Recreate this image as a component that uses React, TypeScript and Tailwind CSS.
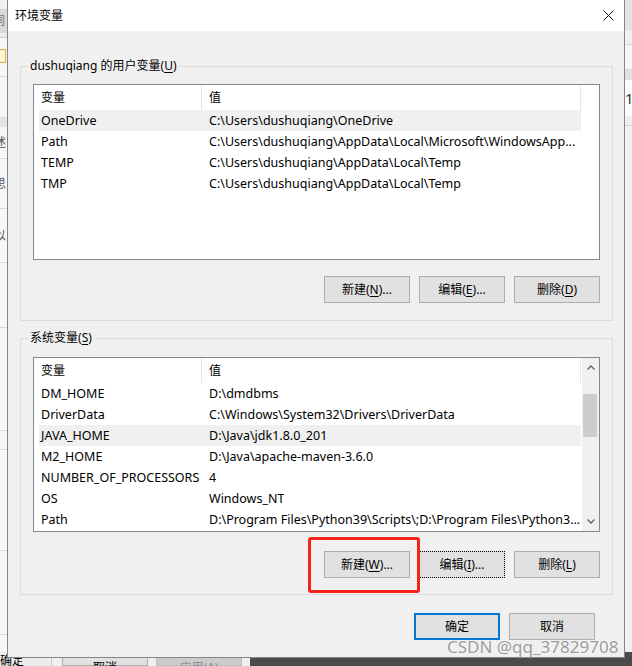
import React from 'react';

type Row = [string, string];

const userVars: Row[] = [
  ['OneDrive', 'C:\\Users\\dushuqiang\\OneDrive'],
  ['Path', 'C:\\Users\\dushuqiang\\AppData\\Local\\Microsoft\\WindowsApp...'],
  ['TEMP', 'C:\\Users\\dushuqiang\\AppData\\Local\\Temp'],
  ['TMP', 'C:\\Users\\dushuqiang\\AppData\\Local\\Temp'],
];

const systemVars: Row[] = [
  ['DM_HOME', 'D:\\dmdbms'],
  ['DriverData', 'C:\\Windows\\System32\\Drivers\\DriverData'],
  ['JAVA_HOME', 'D:\\Java\\jdk1.8.0_201'],
  ['M2_HOME', 'D:\\Java\\apache-maven-3.6.0'],
  ['NUMBER_OF_PROCESSORS', '4'],
  ['OS', 'Windows_NT'],
  ['Path', 'D:\\Program Files\\Python39\\Scripts\\;D:\\Program Files\\Python3...'],
];

function Chevron({ up }: { up?: boolean }) {
  return (
    <svg width="8" height="5" viewBox="0 0 8 5">
      <polyline
        points={up ? '0.5,4.5 4,1 7.5,4.5' : '0.5,0.5 4,4 7.5,0.5'}
        fill="none"
        stroke="#606060"
        strokeWidth="1.3"
      />
    </svg>
  );
}

function ListView({ rows, selected, height, scroll }: { rows: Row[]; selected: number; height: string; scroll?: boolean }) {
  return (
    <div className={`flex border border-[#828790] bg-white ${height}`}>
      <div className="flex min-w-0 flex-1 flex-col">
        <div className="flex h-[25px] shrink-0">
          <div className="flex w-[168px] items-center border-r border-[#e5e5e5] pl-[7px]">变量</div>
          <div className="flex w-[379px] items-center border-r border-[#e5e5e5] pl-[7px]">值</div>
        </div>
        {rows.map(([name, value], i) => (
          <div
            key={name + i}
            className={`ml-[5px] flex h-[21px] w-[542px] shrink-0 items-center pt-[2px] text-[12.5px] ${i === selected ? 'bg-[#f0f0f0]' : ''}`}
          >
            <div className="w-[163px] shrink-0 whitespace-nowrap pl-[2px]">{name}</div>
            <div className="overflow-hidden whitespace-nowrap pl-[7px]">{value}</div>
          </div>
        ))}
      </div>
      {scroll && (
        <div className="flex w-[17px] shrink-0 flex-col bg-[#f0f0f0]">
          <div className="flex h-[19px] items-center justify-center">
            <Chevron up />
          </div>
          <div className="flex-1">
            <div className="ml-[1px] mt-[17px] h-[43px] w-[14px] bg-[#cdcdcd]" />
          </div>
          <div className="flex h-[19px] items-center justify-center">
            <Chevron />
          </div>
        </div>
      )}
    </div>
  );
}

function Btn({ text, hot, tail = '', focus, primary }: { text: string; hot?: string; tail?: string; focus?: boolean; primary?: boolean }) {
  const border = primary
    ? 'border-2 border-[#0078d7]'
    : focus
      ? 'border border-dotted border-black'
      : 'border border-[#adadad]';
  return (
    <div className={`flex h-[27px] w-[86px] items-center justify-center bg-[#e1e1e1] ${border}`}>
      {text}
      {hot && (
        <>
          (<u className="underline-offset-2">{hot}</u>)
        </>
      )}
      {tail}
    </div>
  );
}

function Group({ label, hot, children, className = '' }: { label: string; hot: string; children: React.ReactNode; className?: string }) {
  return (
    <fieldset className={`min-w-0 border border-[#dcdcdc] px-[12px] ${className}`}>
      <legend className="-ml-[5px] px-[2px] leading-4">
        {label}(<u className="underline-offset-2">{hot}</u>)
      </legend>
      {children}
    </fieldset>
  );
}

function LeftStrip() {
  return (
    <div className="absolute left-0 top-0 flex h-full w-[8px] flex-col overflow-hidden bg-[#f7f7f7] text-[#555]">
      <div className="h-[9px] shrink-0 bg-[#f0f0f0]" />
      <div className="flex h-[24px] shrink-0 items-center bg-[#dadada] text-[#777]">
        <span className="-ml-[7px]">词</span>
      </div>
      <div className="h-[5px] shrink-0 border-b border-[#d0d0d0] bg-[#ececec]" />
      <div className="h-[11px] shrink-0" />
      <div className="h-[14px] w-[6px] shrink-0 border border-l-0 border-[#e8a33d] bg-[#fff3d6]" />
      <div className="h-[14px] shrink-0 border-b border-[#d6d6d6]" />
      <div className="h-[40px] shrink-0" />
      <div className="h-[10px] shrink-0 bg-[#e3e3e3]" />
      <div className="flex h-[32px] shrink-0 items-center border-b border-[#d6d6d6]">
        <span className="-ml-[6px]">述</span>
      </div>
      <div className="flex h-[50px] shrink-0 items-center border-b border-[#d6d6d6]">
        <span className="-ml-[6px]">思</span>
      </div>
      <div className="flex h-[54px] shrink-0 items-center border-b border-[#d6d6d6]">
        <span className="-ml-[6px]">以</span>
      </div>
      <div className="h-[65px] shrink-0 border-b border-[#d6d6d6]" />
      <div className="h-[103px] shrink-0 border-b border-[#d6d6d6]" />
      <div className="h-[19px] shrink-0 border-b border-[#d6d6d6]" />
      <div className="h-[101px] shrink-0 border-b border-[#d6d6d6]" />
      <div className="h-[84px] shrink-0 border-b border-[#d6d6d6]" />
    </div>
  );
}

function RightStrip() {
  return (
    <div className="absolute right-0 top-0 flex h-full w-[8px] flex-col overflow-hidden bg-[#f0f0f0]">
      <div className="h-[30px] shrink-0 bg-[#e4e4e4]" />
      <div className="h-[15px] shrink-0 border-b border-[#d6d6d6]" />
      <div className="h-[25px] shrink-0 border-b border-[#d6d6d6] bg-[#f7f7f7]" />
      <div className="h-[10px] shrink-0 bg-[#e2e2e2]" />
      <div className="flex h-[36px] shrink-0 items-center bg-white pl-[1px] text-[15px] text-[#333]">1.</div>
      <div className="h-[10px] shrink-0 border-b border-[#d6d6d6]" />
    </div>
  );
}

function BottomStrip() {
  return (
    <div className="absolute left-0 top-[652px] flex h-[14px] w-full">
      <div className="flex h-full w-[52px] shrink-0 items-start overflow-hidden border-r border-[#c8c8c8] bg-[#ececec]">
        <span className="mt-[1px] leading-4">确定</span>
      </div>
      <div className="ml-[10px] flex h-full w-[86px] shrink-0 justify-center border border-[#adadad] bg-[#e1e1e1]">
        <span className="mt-[7px] leading-4">取消</span>
      </div>
      <div className="ml-[8px] flex h-full w-[86px] shrink-0 justify-center border border-[#bfbfbf] bg-[#cccccc] text-[#8c8c8c]">
        <span className="mt-[7px] leading-4">应用(A)</span>
      </div>
      <div className="ml-[8px] h-full flex-1 bg-[#4b4b4b]" />
    </div>
  );
}

export default function App() {
  return (
    <div className="relative h-[666px] w-[632px] overflow-hidden bg-[#f0f0f0] font-[family-name:'Noto_Sans','Noto_Sans_CJK_SC',sans-serif] text-[12px] text-black">
      <LeftStrip />
      <RightStrip />
      <BottomStrip />

      {/* dialog window */}
      <div className="absolute left-[7px] top-0 flex h-[658px] w-[618px] flex-col border-x border-b border-[#868686] bg-[#f0f0f0]">
        <div className="flex h-[31px] shrink-0 items-center justify-between bg-white pl-[7px] pr-[10px]">
          <span>环境变量</span>
          <svg width="11" height="11" viewBox="0 0 11 11">
            <path d="M0.5 0.5 L10.5 10.5 M10.5 0.5 L0.5 10.5" stroke="#111" strokeWidth="1" />
          </svg>
        </div>

        <div className="flex flex-col pl-[12px] pr-[11px]">
          <Group label="dushuqiang 的用户变量" hot="U" className="mt-[27px] pb-[17px] pt-[10px]">
            <ListView rows={userVars} selected={0} height="h-[176px]" />
            <div className="mt-[16px] flex justify-end gap-[9px]">
              <Btn text="新建" hot="N" tail="..." />
              <Btn text="编辑" hot="E" tail="..." />
              <Btn text="删除" hot="D" />
            </div>
          </Group>

          <Group label="系统变量" hot="S" className="mt-[9px] pb-[16px] pt-[11px]">
            <ListView rows={systemVars} selected={2} height="h-[175px]" scroll />
            <div className="mt-[19px] flex justify-end gap-[9px]">
              <Btn text="新建" hot="W" tail="..." />
              <Btn text="编辑" hot="I" tail="..." focus />
              <Btn text="删除" hot="L" />
            </div>
          </Group>

          <div className="mr-[18px] mt-[18px] flex justify-end gap-[9px]">
            <Btn text="确定" primary />
            <Btn text="取消" />
          </div>
        </div>
      </div>

      {/* annotation overlay */}
      <div className="absolute left-[308px] top-[537px] h-[56px] w-[112px] rounded-[3px] border-[3px] border-[#f5231b]" />
      <div className="absolute left-[447px] top-[637px] whitespace-nowrap text-[17px] leading-5 text-[#9c9c9c] [text-shadow:0_0_2px_#fff]">
        CSDN @qq_37829708
      </div>
    </div>
  );
}
